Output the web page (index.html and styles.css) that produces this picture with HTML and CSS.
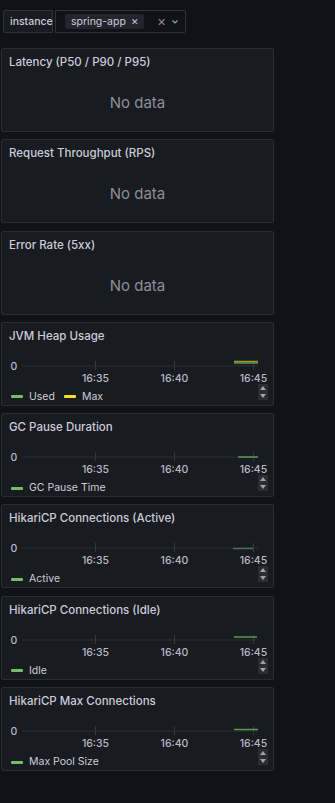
FILE: index.html
```html
<!DOCTYPE html>
<html lang="en">
<head>
    <meta charset="UTF-8">
    <meta name="viewport" content="width=device-width, initial-scale=1.0">
    <title>Spring App Dashboard</title>
    <link rel="stylesheet" href="styles.css">
</head>
<body>
    <div class="vars">
        <div class="var-label">instance</div>
        <div class="var-select">
            <span class="chip">spring-app <span class="chip-x">&#x2715;</span></span>
            <span class="clear">&#x2715;</span>
            <svg class="caret" width="8" height="6" viewBox="0 0 8 6"><path d="M1.5 1.5 L4 4 L6.5 1.5" /></svg>
        </div>
    </div>

    <div class="panel">
        <div class="title">Latency (P50 / P90 / P95)</div>
        <div class="nodata">No data</div>
    </div>
    <div class="panel">
        <div class="title">Request Throughput (RPS)</div>
        <div class="nodata">No data</div>
    </div>
    <div class="panel">
        <div class="title">Error Rate (5xx)</div>
        <div class="nodata">No data</div>
    </div>

    <div class="panel">
        <div class="title">JVM Heap Usage</div>
        <svg class="plot" width="271" height="36">
            <line class="axis" x1="20" y1="18" x2="256" y2="18" />
            <line class="grid" x1="93.5" y1="13" x2="93.5" y2="22" />
            <line class="grid" x1="172.5" y1="13" x2="172.5" y2="22" />
            <line class="grid" x1="251.5" y1="13" x2="251.5" y2="22" />
            <line class="s-yellow" x1="232" y1="13.5" x2="256" y2="13.5" />
            <line class="s-green" x1="232" y1="15" x2="256" y2="15" />
            <text class="ylab" x="12" y="22">0</text>
            <text class="xlab" x="93.5" y="34">16:35</text>
            <text class="xlab" x="172.5" y="34">16:40</text>
            <text class="xlab" x="251.5" y="34">16:45</text>
        </svg>
        <div class="foot">
            <div class="legend">
                <span class="item"><i class="sw green"></i>Used</span>
                <span class="item"><i class="sw yellow"></i>Max</span>
            </div>
            <div class="scroller"><i class="up"></i><i class="down"></i></div>
        </div>
    </div>

    <div class="panel">
        <div class="title">GC Pause Duration</div>
        <svg class="plot" width="271" height="36">
            <line class="axis" x1="20" y1="18" x2="256" y2="18" />
            <line class="grid" x1="93.5" y1="13" x2="93.5" y2="22" />
            <line class="grid" x1="172.5" y1="13" x2="172.5" y2="22" />
            <line class="grid" x1="251.5" y1="13" x2="251.5" y2="22" />
            <line class="s-green" x1="236" y1="18" x2="256" y2="18" />
            <text class="ylab" x="12" y="22">0</text>
            <text class="xlab" x="93.5" y="34">16:35</text>
            <text class="xlab" x="172.5" y="34">16:40</text>
            <text class="xlab" x="251.5" y="34">16:45</text>
        </svg>
        <div class="foot">
            <div class="legend">
                <span class="item"><i class="sw green"></i>GC Pause Time</span>
            </div>
            <div class="scroller"><i class="up"></i><i class="down"></i></div>
        </div>
    </div>

    <div class="panel">
        <div class="title">HikariCP Connections (Active)</div>
        <svg class="plot" width="271" height="36">
            <line class="axis" x1="20" y1="18" x2="256" y2="18" />
            <line class="grid" x1="93.5" y1="13" x2="93.5" y2="22" />
            <line class="grid" x1="172.5" y1="13" x2="172.5" y2="22" />
            <line class="grid" x1="251.5" y1="13" x2="251.5" y2="22" />
            <line class="s-green dim" x1="231" y1="18.5" x2="251" y2="18.5" />
            <text class="ylab" x="12" y="22">0</text>
            <text class="xlab" x="93.5" y="34">16:35</text>
            <text class="xlab" x="172.5" y="34">16:40</text>
            <text class="xlab" x="251.5" y="34">16:45</text>
        </svg>
        <div class="foot">
            <div class="legend">
                <span class="item"><i class="sw green"></i>Active</span>
            </div>
            <div class="scroller"><i class="up"></i><i class="down"></i></div>
        </div>
    </div>

    <div class="panel">
        <div class="title">HikariCP Connections (Idle)</div>
        <svg class="plot" width="271" height="36">
            <line class="axis" x1="20" y1="18" x2="256" y2="18" />
            <line class="grid" x1="93.5" y1="13" x2="93.5" y2="22" />
            <line class="grid" x1="172.5" y1="13" x2="172.5" y2="22" />
            <line class="grid" x1="251.5" y1="13" x2="251.5" y2="22" />
            <line class="s-green" x1="232" y1="15" x2="255" y2="15" />
            <text class="ylab" x="12" y="22">0</text>
            <text class="xlab" x="93.5" y="34">16:35</text>
            <text class="xlab" x="172.5" y="34">16:40</text>
            <text class="xlab" x="251.5" y="34">16:45</text>
        </svg>
        <div class="foot">
            <div class="legend">
                <span class="item"><i class="sw green"></i>Idle</span>
            </div>
            <div class="scroller"><i class="up"></i><i class="down"></i></div>
        </div>
    </div>

    <div class="panel">
        <div class="title">HikariCP Max Connections</div>
        <svg class="plot" width="271" height="36">
            <line class="axis" x1="20" y1="18" x2="256" y2="18" />
            <line class="grid" x1="93.5" y1="13" x2="93.5" y2="22" />
            <line class="grid" x1="172.5" y1="13" x2="172.5" y2="22" />
            <line class="grid" x1="251.5" y1="13" x2="251.5" y2="22" />
            <line class="s-green" x1="232" y1="16.5" x2="256" y2="16.5" />
            <text class="ylab" x="12" y="22">0</text>
            <text class="xlab" x="93.5" y="34">16:35</text>
            <text class="xlab" x="172.5" y="34">16:40</text>
            <text class="xlab" x="251.5" y="34">16:45</text>
        </svg>
        <div class="foot">
            <div class="legend">
                <span class="item"><i class="sw green"></i>Max Pool Size</span>
            </div>
            <div class="scroller"><i class="up"></i><i class="down"></i></div>
        </div>
    </div>
</body>
</html>
```

FILE: styles.css
```css
body {
    margin: 0;
    background-color: #111217;
    color: #ccccdc;
    font-family: Inter, "Noto Sans", sans-serif;
}

.vars {
    display: flex;
    height: 23px;
    width: 183px;
    margin: 10px 0 0 3px;
    font-size: 10.5px;
    white-space: nowrap;
}

.var-label {
    display: flex;
    align-items: center;
    flex-shrink: 0;
    width: 50px;
    padding-left: 6px;
    box-sizing: border-box;
    background-color: #181b1f;
    border: 1px solid #2f3238;
    border-radius: 2px 0 0 2px;
    font-weight: 500;
}

.var-select {
    flex: 1;
    display: flex;
    align-items: center;
    padding-left: 9px;
    margin-left: 2px;
    border: 1px solid #2f3238;
    border-radius: 0 2px 2px 0;
}

.chip {
    display: flex;
    align-items: center;
    flex-shrink: 0;
    height: 15px;
    padding: 0 5px 0 6px;
    background-color: #22252b;
    border-radius: 2px;
    color: #ccccdc;
}

.chip-x {
    margin-left: 5px;
    font-size: 9px;
}

.clear {
    margin-left: 13px;
    font-size: 11px;
    color: #8e8e9b;
}

.caret {
    margin-left: 5px;
    fill: none;
    stroke: #9fa1ab;
    stroke-width: 1.2;
}

.panel {
    width: 271px;
    height: 82px;
    margin: 15px 0 0 1px;
    background-color: #181b1f;
    border: 1px solid #2a2d33;
    border-radius: 2px;
    overflow: hidden;
}

.panel + .panel {
    margin-top: 7.3px;
}

.title {
    height: 16px;
    padding: 5px 0 4px 7px;
    line-height: 16px;
    font-size: 11.5px;
    font-weight: 500;
    color: #ccccdc;
}

.nodata {
    display: flex;
    align-items: center;
    justify-content: center;
    height: 57px;
    font-size: 15px;
    color: #8e8e9b;
}

.plot {
    display: block;
}

.axis {
    stroke: #2c2f35;
    stroke-width: 1;
}

.grid {
    stroke: #34373d;
    stroke-width: 1;
}

.s-green {
    stroke: #5e9955;
    stroke-width: 1.3;
}

.s-green.dim {
    stroke: #4e7046;
}

.s-yellow {
    stroke: #a59a2c;
    stroke-width: 1.3;
}

.ylab,
.xlab {
    font-size: 10.5px;
    font-weight: 500;
    fill: #b9b9c6;
    text-anchor: middle;
}

.foot {
    display: flex;
    justify-content: space-between;
}

.legend {
    display: flex;
    gap: 9px;
    height: 16px;
    padding: 6px 0 0 9px;
    box-sizing: border-box;
    overflow: hidden;
    font-size: 10.5px;
    line-height: 14px;
    color: #ccccdc;
}

.item {
    display: flex;
    align-items: center;
    height: 14px;
}

.sw {
    display: inline-block;
    width: 12px;
    height: 3px;
    margin-right: 6px;
    border-radius: 1px;
}

.sw.green {
    background-color: #73bf69;
}

.sw.yellow {
    background-color: #fade2a;
}

.scroller {
    display: flex;
    flex-direction: column;
    justify-content: space-around;
    align-items: center;
    width: 10px;
    height: 16px;
    margin-right: 5px;
    background-color: #2a2d33;
}

.scroller i {
    width: 0;
    height: 0;
    border-left: 3px solid transparent;
    border-right: 3px solid transparent;
}

.scroller .up {
    border-bottom: 4px solid #a0a2aa;
}

.scroller .down {
    border-top: 4px solid #a0a2aa;
}
```
